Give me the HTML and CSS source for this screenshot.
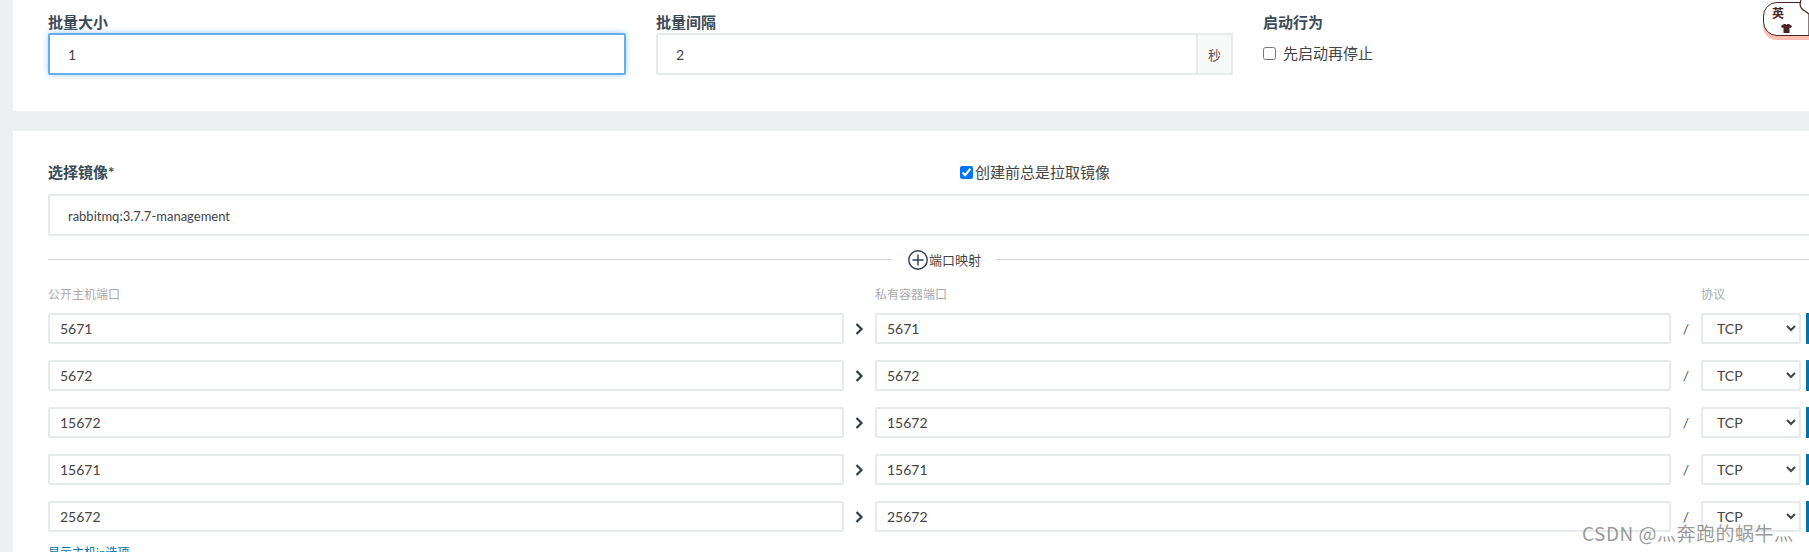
FILE: index.html
```html
<!DOCTYPE html>
<html lang="zh-CN">
<head>
<meta charset="UTF-8">
<meta name="viewport" content="width=device-width, initial-scale=1.0">
<title>部署服务</title>
<link rel="stylesheet" href="styles.css">
</head>
<body>
  <section class="card batch-card">
    <div class="batch-grid">
      <div>
        <label class="field-label">批量大小</label>
        <input class="text-input big-input is-focused" type="text" value="1">
      </div>
      <div>
        <label class="field-label">批量间隔</label>
        <div class="input-group">
          <input class="text-input big-input" type="text" value="2">
          <span class="addon">秒</span>
        </div>
      </div>
      <div>
        <label class="field-label">启动行为</label>
        <label class="start-check"><input type="checkbox">先启动再停止</label>
      </div>
    </div>
  </section>

  <section class="card image-card">
    <div class="image-head">
      <label class="field-label">选择镜像*</label>
      <label class="pull-check"><input type="checkbox" checked>创建前总是拉取镜像</label>
    </div>
    <input class="text-input big-input image-input" type="text" value="rabbitmq:3.7.7-management">

    <div class="divider">
      <span class="divider-line divider-left"></span>
      <span class="divider-title">
        <svg class="plus-icon" width="20" height="20" viewBox="0 0 20 20">
          <circle cx="10" cy="10" r="9.2" fill="none" stroke="#2c3e50" stroke-width="1.4"/>
          <path d="M10 4.5v11M4.5 10h11" stroke="#2c3e50" stroke-width="1.4"/>
        </svg>端口映射
      </span>
      <span class="divider-line"></span>
    </div>

    <div class="port-row port-head">
      <span>公开主机端口</span>
      <span></span>
      <span>私有容器端口</span>
      <span></span>
      <span>协议</span>
    </div>

    <div class="port-row">
      <input class="text-input" type="text" value="5671">
      <svg class="arrow" width="9" height="12" viewBox="0 0 9 12"><path d="M1.5 1l5 5-5 5" fill="none" stroke="#2c3e50" stroke-width="2.2"/></svg>
      <input class="text-input" type="text" value="5671">
      <span class="slash">/</span>
      <select class="proto"><option>TCP</option><option>UDP</option></select>
      <button class="remove-btn" type="button"></button>
    </div>
    <div class="port-row">
      <input class="text-input" type="text" value="5672">
      <svg class="arrow" width="9" height="12" viewBox="0 0 9 12"><path d="M1.5 1l5 5-5 5" fill="none" stroke="#2c3e50" stroke-width="2.2"/></svg>
      <input class="text-input" type="text" value="5672">
      <span class="slash">/</span>
      <select class="proto"><option>TCP</option><option>UDP</option></select>
      <button class="remove-btn" type="button"></button>
    </div>
    <div class="port-row">
      <input class="text-input" type="text" value="15672">
      <svg class="arrow" width="9" height="12" viewBox="0 0 9 12"><path d="M1.5 1l5 5-5 5" fill="none" stroke="#2c3e50" stroke-width="2.2"/></svg>
      <input class="text-input" type="text" value="15672">
      <span class="slash">/</span>
      <select class="proto"><option>TCP</option><option>UDP</option></select>
      <button class="remove-btn" type="button"></button>
    </div>
    <div class="port-row">
      <input class="text-input" type="text" value="15671">
      <svg class="arrow" width="9" height="12" viewBox="0 0 9 12"><path d="M1.5 1l5 5-5 5" fill="none" stroke="#2c3e50" stroke-width="2.2"/></svg>
      <input class="text-input" type="text" value="15671">
      <span class="slash">/</span>
      <select class="proto"><option>TCP</option><option>UDP</option></select>
      <button class="remove-btn" type="button"></button>
    </div>
    <div class="port-row">
      <input class="text-input" type="text" value="25672">
      <svg class="arrow" width="9" height="12" viewBox="0 0 9 12"><path d="M1.5 1l5 5-5 5" fill="none" stroke="#2c3e50" stroke-width="2.2"/></svg>
      <input class="text-input" type="text" value="25672">
      <span class="slash">/</span>
      <select class="proto"><option>TCP</option><option>UDP</option></select>
      <button class="remove-btn" type="button"></button>
    </div>

    <a class="ip-link" href="#">显示主机ip选项</a>
  </section>

  <!-- input method skin sitting on top of the page -->
  <div class="ime">
    <span class="ime-lang">英</span>
    <svg class="ime-shirt" width="11" height="9" viewBox="0 0 11 9"><path d="M0 2l3-2h1.500l1 1 1-1H8l3 2-1 2-1.500-.5V9h-6V3.500L1 4z" fill="#4a2424"/></svg>
    <svg class="ime-heart" width="12" height="36" viewBox="0 0 12 36"><path d="M2 0c-2 5 0 9 4 11l4 3v22h4V-2z" fill="#fff"/><path d="M2 0c-2 5 0 9 4 11l4 3v22" fill="none" stroke="#4a2424" stroke-width="1.200"/></svg>
  </div>

  <div class="watermark">CSDN @灬奔跑的蜗牛灬</div>
</body>
</html>
```

FILE: styles.css
```css
html, body {
  height: 552px;
  overflow: hidden;
}
body {
  position: relative;
  margin: 0;
  padding-left: 13px;
  background-color: #ecf0f1;
  color: #2c3e50;
  font-family: Lato, "Noto Sans CJK SC", sans-serif;
  font-size: 14px;
}
.card {
  background-color: #fff;
  padding-left: 35px;
  width: 1900px;
}
.batch-card {
  height: 111px;
  padding-top: 12px;
  box-sizing: border-box;
  margin-bottom: 20px;
}
.batch-grid {
  display: grid;
  grid-template-columns: 578px 577px 1fr;
  column-gap: 30px;
}
.batch-grid .field-label {
  margin-bottom: 1px;
}
.field-label {
  display: block;
  font-size: 15px;
  font-weight: 700;
  line-height: 20px;
  color: #3a4a56;
}
.text-input {
  box-sizing: border-box;
  width: 100%;
  height: 31px;
  padding: 0 10px;
  border: 2px solid #e6eaea;
  border-radius: 2px;
  background-color: #fff;
  color: #444;
  font-family: inherit;
  font-size: 14px;
  outline: none;
}
.big-input {
  height: 42px;
  padding: 0 18px;
}
.is-focused {
  border-color: #66ade9;
  box-shadow: 0 0 6px rgba(102, 173, 233, 0.6);
}
.input-group {
  display: flex;
}
.input-group .text-input {
  flex: 1;
  min-width: 0;
  border-radius: 2px 0 0 2px;
}
.addon {
  box-sizing: border-box;
  flex: 0 0 35px;
  display: flex;
  align-items: center;
  justify-content: center;
  border: 2px solid #e6eaea;
  border-left: none;
  background-color: #f8f9f9;
  font-size: 13px;
  color: #555;
}
.start-check {
  display: flex;
  align-items: center;
  margin-top: 11px;
  font-size: 15px;
  line-height: 20px;
  color: #444;
}
.start-check input {
  width: 13px;
  height: 13px;
  margin: 0 7px 0 0;
}
.image-card {
  height: 500px;
  padding-top: 31px;
  box-sizing: border-box;
}
.image-head {
  display: grid;
  grid-template-columns: 912px 1fr;
  align-items: center;
  margin-bottom: 12px;
}
.pull-check {
  display: flex;
  align-items: center;
  font-size: 15px;
  line-height: 20px;
  color: #444;
}
.pull-check input {
  width: 13px;
  height: 13px;
  margin: 0 2px 0 0;
}
.image-input {
  display: block;
  width: 1800px;
  padding-top: 2px;
  font-size: 13px;
}
.divider {
  display: flex;
  align-items: center;
  width: 1800px;
  height: 20px;
  margin-top: 13px;
}
.divider-line {
  flex: 1;
  height: 1px;
  background-color: #d2d5d5;
}
.divider-left {
  flex: 0 0 844px;
}
.divider-title {
  display: flex;
  align-items: center;
  gap: 1px;
  padding: 0 15px 0 16px;
  font-size: 13px;
  color: #444;
}
.plus-icon {
  position: relative;
  top: 1px;
}
.port-row {
  display: grid;
  grid-template-columns: 796px 31px 796px 30px 100px 40px;
  align-items: center;
  margin-bottom: 16px;
}
.port-head {
  height: 16px;
  margin: 16px 0 12px;
  font-size: 12px;
  color: #aaa;
}
.arrow {
  justify-self: center;
}
.slash {
  text-align: center;
  color: #555;
}
.proto {
  box-sizing: border-box;
  width: 100px;
  height: 31px;
  padding: 0 10px;
  border: 2px solid #e6eaea;
  border-radius: 2px;
  background-color: #fff;
  color: #444;
  font-family: inherit;
  font-size: 14px;
  outline: none;
}
.remove-btn {
  height: 31px;
  width: 40px;
  margin-left: 5px;
  border: none;
  background-color: #0075a8;
}
.ip-link {
  display: block;
  margin-top: -5px;
  line-height: 20px;
  font-size: 12px;
  color: #0075a8;
  text-decoration: none;
}
.ime {
  position: absolute;
  top: 2px;
  left: 1763px;
  box-sizing: border-box;
  width: 70px;
  height: 34px;
  border: 1.5px solid #4a2424;
  border-radius: 14px;
  background-color: #fff;
  box-shadow: 0 4px 0 #ffbdb4;
}
.ime-lang {
  position: absolute;
  top: 4px;
  left: 8px;
  font-size: 12px;
  line-height: 14px;
  font-weight: 700;
  color: #4a2424;
}
.ime-shirt {
  position: absolute;
  top: 21px;
  left: 17px;
}
.ime-heart {
  position: absolute;
  top: -3.500px;
  left: 35px;
}
.watermark {
  position: absolute;
  left: 1582px;
  top: 520px;
  font-family: "Noto Sans CJK SC", sans-serif;
  font-size: 19px;
  line-height: 26px;
  letter-spacing: 0.5px;
  color: rgba(120, 120, 120, 0.75);
  white-space: nowrap;
}
```
